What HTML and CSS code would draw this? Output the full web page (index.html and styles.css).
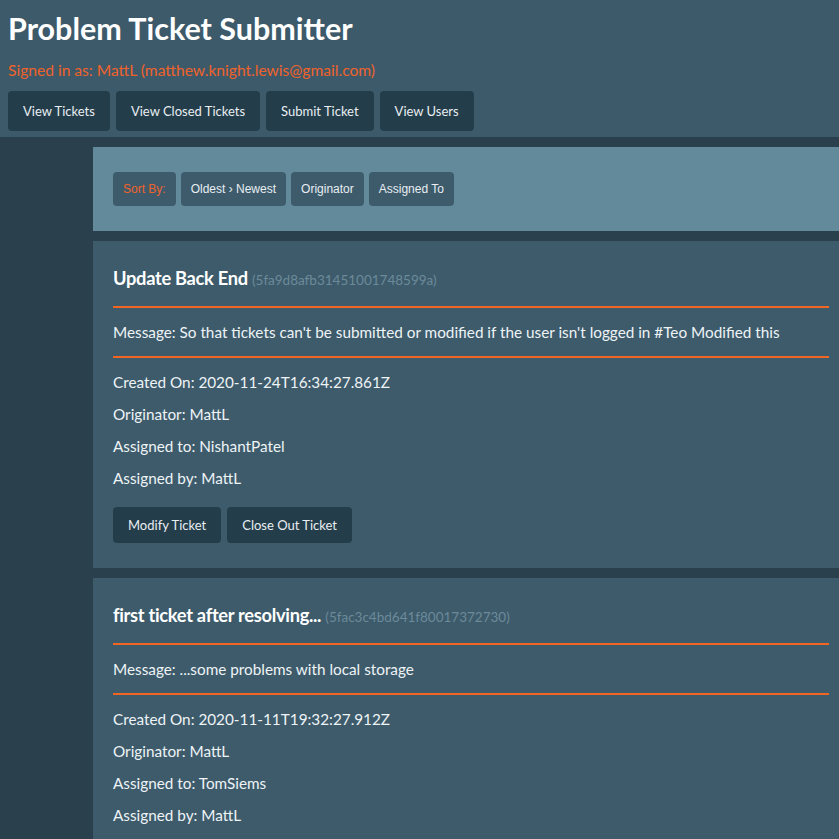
FILE: index.html
```html
<!DOCTYPE html>
<html lang="en">
<head>
<meta charset="utf-8">
<title>Problem Ticket Submitter</title>
<link rel="stylesheet" href="styles.css">
</head>
<body>
<header class="top">
  <h1 class="title">Problem Ticket Submitter</h1>
  <div class="signed">Signed in as: MattL (matthew.knight.lewis@gmail.com)</div>
  <nav class="nav">
    <button class="btn">View Tickets</button>
    <button class="btn">View Closed Tickets</button>
    <button class="btn">Submit Ticket</button>
    <button class="btn">View Users</button>
  </nav>
</header>
<main class="main">
  <section class="sortbar">
    <span class="sort-btn sort-label">Sort By:</span>
    <button class="sort-btn">Oldest › Newest</button>
    <button class="sort-btn">Originator</button>
    <button class="sort-btn">Assigned To</button>
  </section>
  <article class="card">
    <h2 class="card-title">Update Back End <span class="card-id">(5fa9d8afb31451001748599a)</span></h2>
    <div class="message">Message: So that tickets can't be submitted or modified if the user isn't logged in #Teo Modified this</div>
    <div class="details">
      <p class="row">Created On: 2020-11-24T16:34:27.861Z</p>
      <p class="row">Originator: MattL</p>
      <p class="row">Assigned to: NishantPatel</p>
      <p class="row">Assigned by: MattL</p>
    </div>
    <div class="actions">
      <button class="btn btn-sm">Modify Ticket</button>
      <button class="btn btn-sm">Close Out Ticket</button>
    </div>
  </article>
  <article class="card">
    <h2 class="card-title">first ticket after resolving... <span class="card-id">(5fac3c4bd641f80017372730)</span></h2>
    <div class="message">Message: ...some problems with local storage</div>
    <div class="details">
      <p class="row">Created On: 2020-11-11T19:32:27.912Z</p>
      <p class="row">Originator: MattL</p>
      <p class="row">Assigned to: TomSiems</p>
      <p class="row">Assigned by: MattL</p>
    </div>
    <div class="actions">
      <button class="btn btn-sm">Modify Ticket</button>
      <button class="btn btn-sm">Close Out Ticket</button>
    </div>
  </article>
</main>
</body>
</html>
```
FILE: styles.css
```css
* { box-sizing: border-box; }
html, body {
  margin: 0;
  background: #2a404c;
  overflow: hidden;
}
body {
  font-family: Lato, "Noto Sans", sans-serif;
  color: #eef3f6;
}
.top {
  background: #3d5a6a;
  padding: 7px 8px 6px 8px;
}
.title {
  margin: 0;
  font-size: 30.5px;
  line-height: 42px;
  font-weight: 700;
  color: #ffffff;
}
.signed {
  color: #f0622b;
  font-size: 15.6px;
  line-height: 22px;
  margin-top: 10px;
}
.nav {
  display: flex;
  gap: 6px;
  margin-top: 10px;
}
.btn {
  font-family: inherit;
  font-size: 13px;
  color: #e8eef2;
  background: #243d4a;
  border: none;
  border-radius: 4px;
  height: 40px;
  padding: 0 15px;
  cursor: pointer;
}
.main {
  margin-left: 93px;
  padding-top: 10px;
  display: flex;
  flex-direction: column;
  gap: 10px;
}
.sortbar {
  background: #628a9a;
  height: 84px;
  padding: 25px 20px;
  display: flex;
  gap: 5px;
}
.sort-btn {
  font-family: "Liberation Sans", Arial, sans-serif;
  font-size: 12px;
  height: 34px;
  line-height: 34px;
  padding: 0 10px;
  background: #3d5b6b;
  color: #e8eef2;
  border: none;
  border-radius: 4px;
}
.sort-label { color: #f0622b; }
.card {
  background: #3d5b6b;
  padding: 20px 10px 25px 20px;
}
.card-title {
  margin: 0;
  font-size: 18.3px;
  letter-spacing: -0.3px;
  line-height: 34px;
  height: 34px;
  font-weight: 700;
  color: #ffffff;
}
.card-id {
  font-size: 13.5px;
  letter-spacing: 0;
  line-height: 1;
  font-weight: 400;
  color: #6c8a99;
}
.message {
  margin-top: 11px;
  border-top: 2px solid #f26522;
  border-bottom: 2px solid #f26522;
  padding: 13px 0;
  font-size: 15.3px;
  line-height: 22px;
}
.details {
  margin-top: 13px;
  display: flex;
  flex-direction: column;
  gap: 10px;
}
.row {
  margin: 0;
  font-size: 15.3px;
  line-height: 22px;
}
.actions {
  margin-top: 18px;
  display: flex;
  gap: 6px;
}
.btn-sm {
  height: 36px;
  font-size: 13px;
}
```
